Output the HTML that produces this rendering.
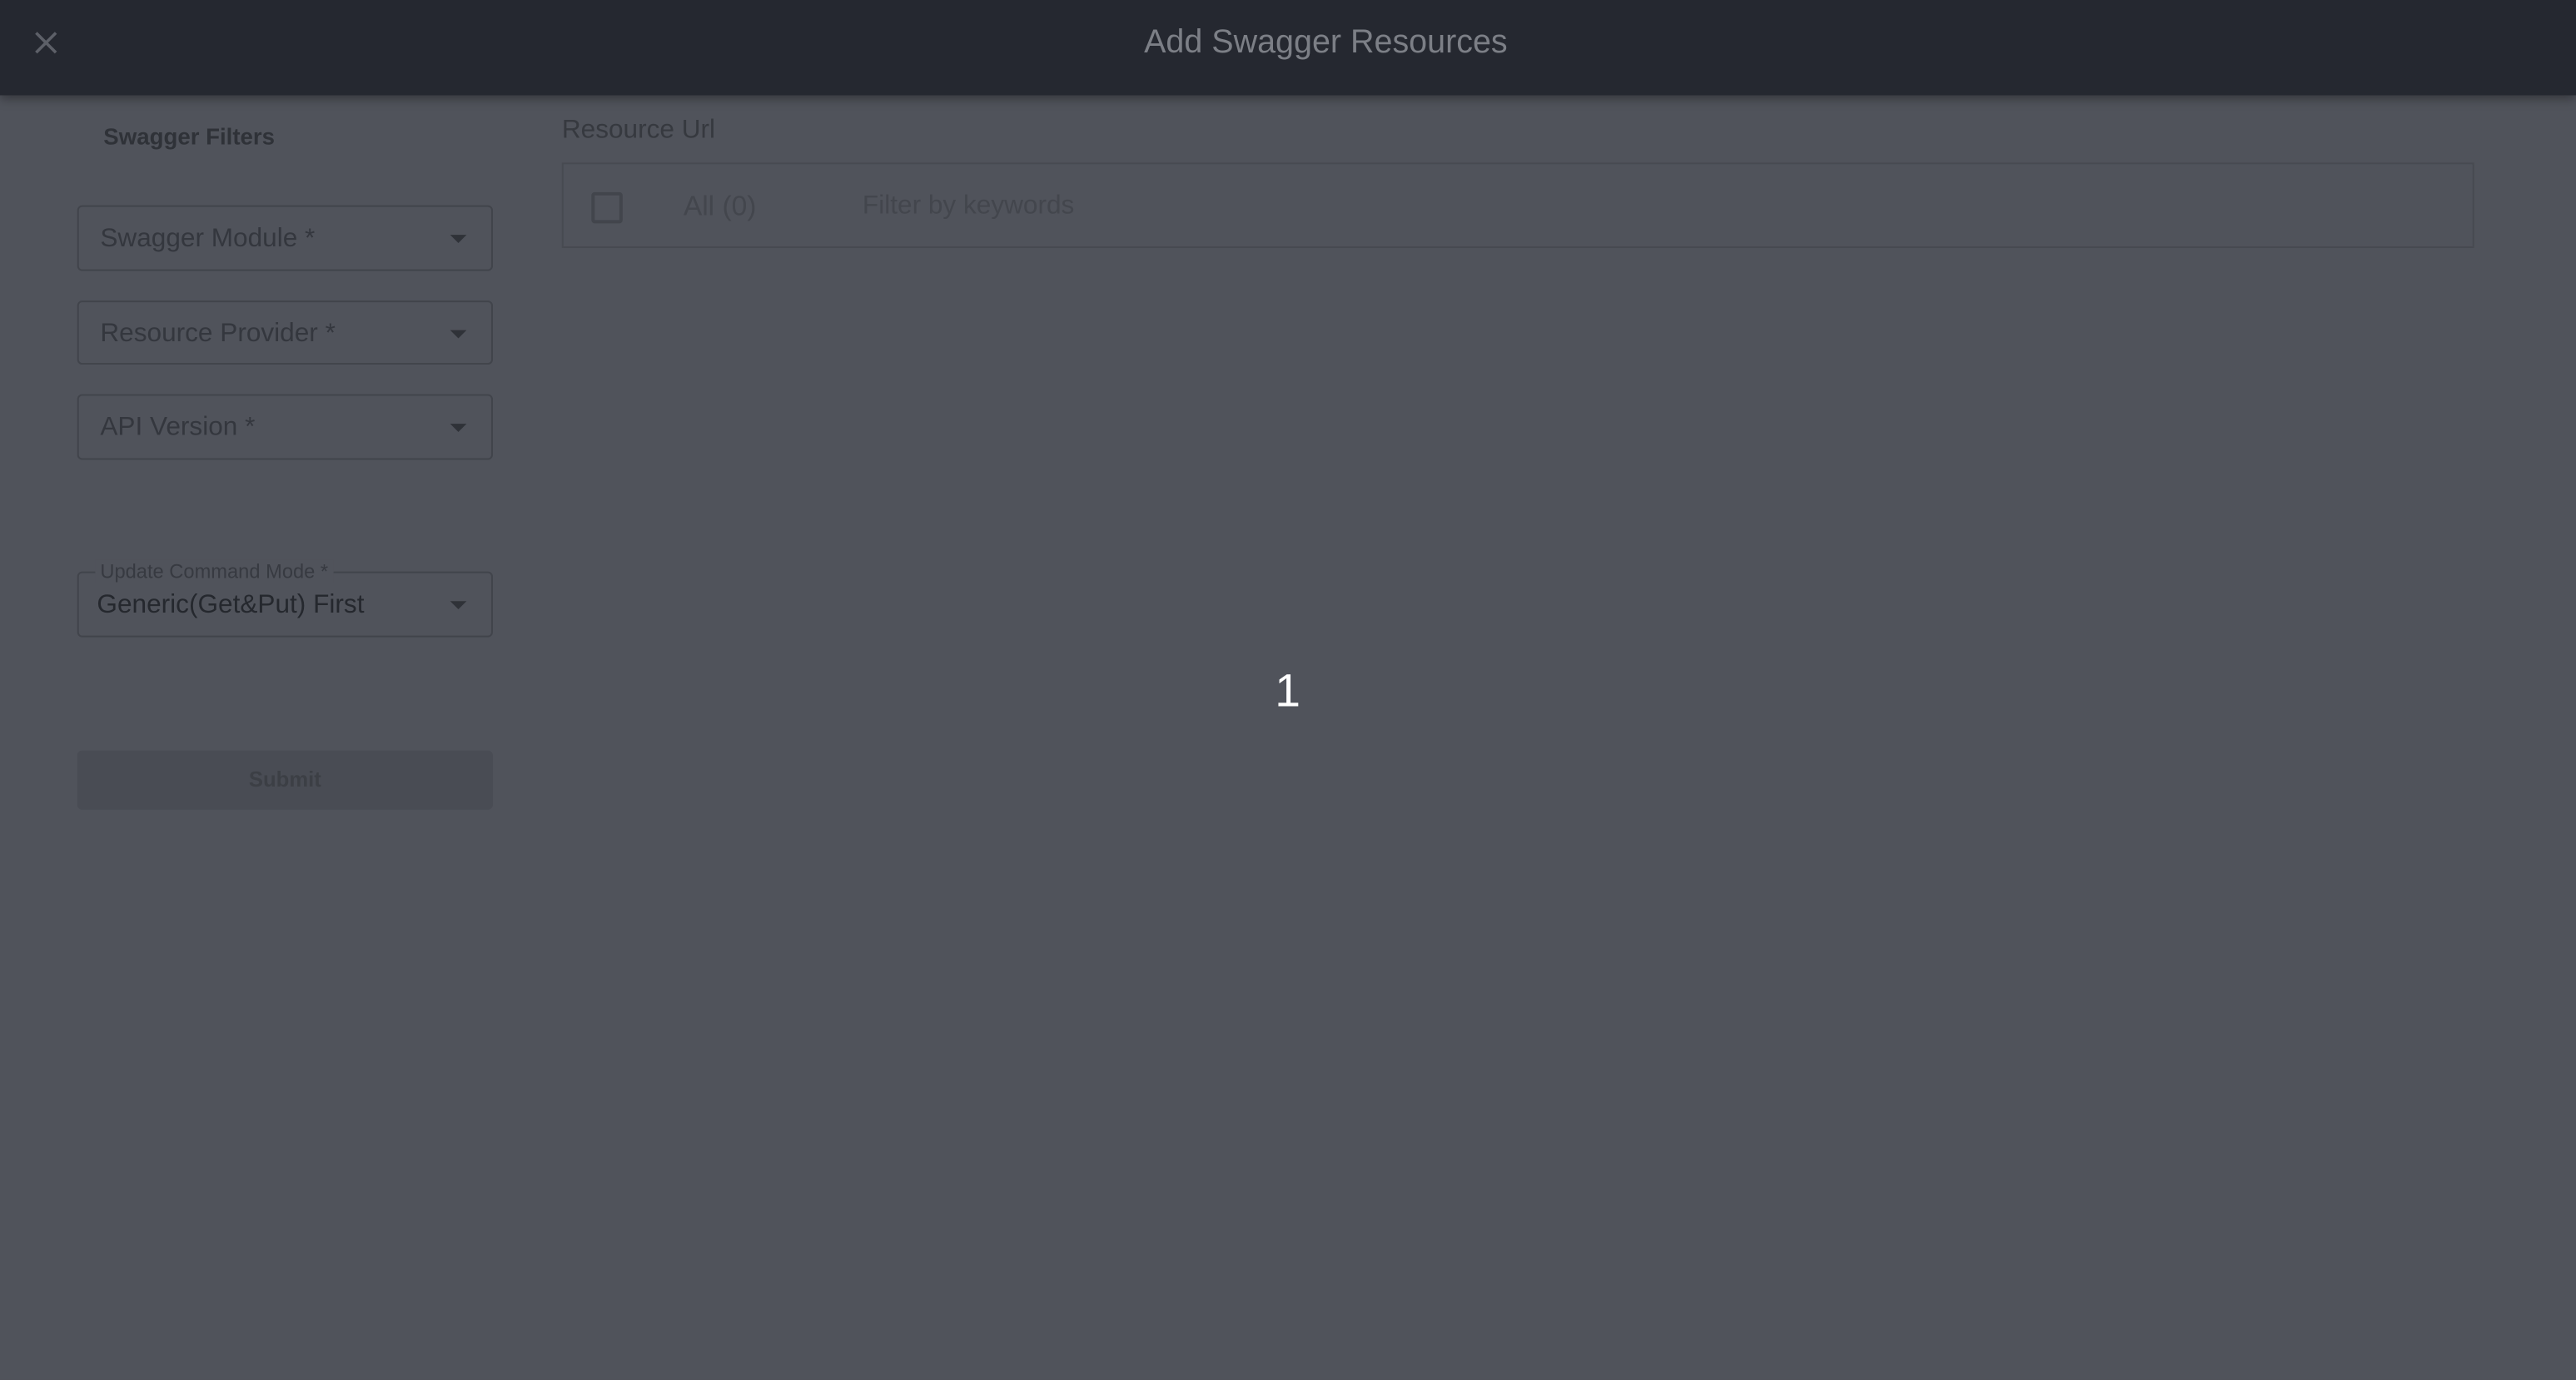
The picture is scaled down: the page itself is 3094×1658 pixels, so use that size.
<!DOCTYPE html>
<html><head><meta charset="utf-8"><style>
html,body{margin:0;padding:0;width:3094px;height:1656px;overflow:hidden;background:#50535b;}
#s{position:absolute;left:0;top:0;width:1568px;height:840px;transform:scale(1.97321);transform-origin:0 0;font-family:"Liberation Sans",sans-serif;background:#50535b;}
.hd{position:absolute;left:0;top:0;width:1568px;height:58px;background:#252830;box-shadow:0 2px 6px rgba(0,0,0,.35);}
.t{position:absolute;white-space:nowrap;}
.sel{position:absolute;left:47px;width:253px;border:1px solid #41444b;border-radius:3px;box-sizing:border-box;}
.arr{position:absolute;right:15px;top:50%;margin-top:-2px;width:0;height:0;border-left:5px solid transparent;border-right:5px solid transparent;border-top:5px solid #2f3238;}
.lbl{position:absolute;left:13px;top:50%;transform:translateY(-45%);font-size:16px;color:#34373e;}
</style></head><body><div id="s">
<div class="hd">
<svg style="position:absolute;left:20px;top:18px" width="16" height="16" viewBox="0 0 16 16"><path d="M2 2L14 14M14 2L2 14" stroke="#5d6068" stroke-width="1.8"/></svg>
<div class="t" style="left:0;width:1614px;text-align:center;top:15px;font-size:20px;color:#7c7f86;">Add Swagger Resources</div>
</div>
<div class="t" style="left:63px;top:75px;font-size:14px;font-weight:bold;color:#2f3238;">Swagger Filters</div>
<div class="sel" style="top:125px;height:40px"><span class="lbl">Swagger Module *</span><span class="arr"></span></div>
<div class="sel" style="top:183px;height:39px"><span class="lbl">Resource Provider *</span><span class="arr"></span></div>
<div class="sel" style="top:240px;height:40px"><span class="lbl">API Version *</span><span class="arr"></span></div>
<div class="sel" style="top:348px;height:40px"><span class="arr"></span>
<span class="t" style="left:10px;top:-8px;font-size:12px;color:#373a41;background:#50535b;padding:0 3px;">Update Command Mode *</span>
<span class="t" style="left:11px;top:11px;font-size:16px;color:#25282e;">Generic(Get&amp;Put) First</span></div>
<div style="position:absolute;left:47px;top:457px;width:253px;height:36px;background:#494c54;border-radius:3px;text-align:center;line-height:36px;font-size:13px;font-weight:bold;color:#3c3f45;">Submit</div>
<div class="t" style="left:342px;top:71px;font-size:16px;color:#36393f;">Resource Url</div>
<div style="position:absolute;left:342px;top:99px;width:1164px;height:52px;border:1px solid #474a51;box-sizing:border-box;">
<div style="position:absolute;left:17px;top:17px;width:15px;height:15px;border:2px solid #42454c;border-radius:2px;"></div>
<div class="t" style="left:73px;top:16px;font-size:17px;color:#43464d;">All (0)</div>
<div class="t" style="left:182px;top:17px;font-size:16px;color:#43464d;">Filter by keywords</div>
</div>
<div class="t" style="left:776px;top:405px;font-size:28px;color:#ffffff;">1</div>
</div></body></html>
